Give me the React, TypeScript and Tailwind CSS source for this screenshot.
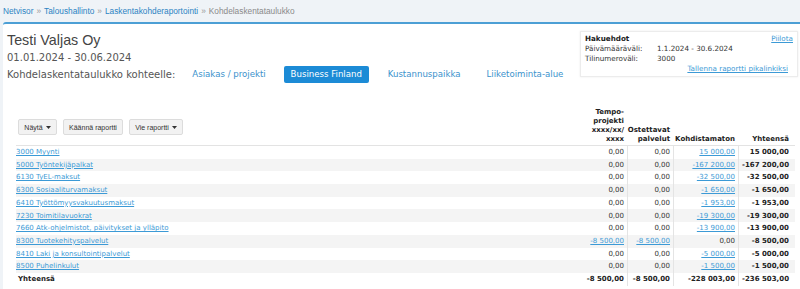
const rows: { name: string; tempo: string; ost: string; kohd: string; tot: string; tempoLink?: boolean; ostLink?: boolean; kohdLink?: boolean }[] = [
  { name: "3000 Myynti", tempo: "0,00", ost: "0,00", kohd: "15 000,00", tot: "15 000,00", kohdLink: true },
  { name: "5000 Työntekijäpalkat", tempo: "0,00", ost: "0,00", kohd: "-167 200,00", tot: "-167 200,00", kohdLink: true },
  { name: "6130 TyEL-maksut", tempo: "0,00", ost: "0,00", kohd: "-32 500,00", tot: "-32 500,00", kohdLink: true },
  { name: "6300 Sosiaaliturvamaksut", tempo: "0,00", ost: "0,00", kohd: "-1 650,00", tot: "-1 650,00", kohdLink: true },
  { name: "6410 Työttömyysvakuutusmaksut", tempo: "0,00", ost: "0,00", kohd: "-1 953,00", tot: "-1 953,00", kohdLink: true },
  { name: "7230 Toimitilavuokrat", tempo: "0,00", ost: "0,00", kohd: "-19 300,00", tot: "-19 300,00", kohdLink: true },
  { name: "7660 Atk-ohjelmistot, päivitykset ja ylläpito", tempo: "0,00", ost: "0,00", kohd: "-13 900,00", tot: "-13 900,00", kohdLink: true },
  { name: "8300 Tuotekehityspalvelut", tempo: "-8 500,00", ost: "-8 500,00", kohd: "0,00", tot: "-8 500,00", tempoLink: true, ostLink: true },
  { name: "8410 Laki ja konsultointipalvelut", tempo: "0,00", ost: "0,00", kohd: "-5 000,00", tot: "-5 000,00", kohdLink: true },
  { name: "8500 Puhelinkulut", tempo: "0,00", ost: "0,00", kohd: "-1 500,00", tot: "-1 500,00", kohdLink: true },
];

const Caret = () => (
  <svg width="5" height="3" viewBox="0 0 5 3" className="ml-[3px]">
    <path d="M0 0H5L2.5 3Z" fill="#333" />
  </svg>
);

const Num = ({ value, link }: { value: string; link?: boolean }) =>
  link ? <a href="#" className="text-[#3c9ad6] underline">{value}</a> : <span>{value}</span>;

export default function App() {
  return (
    <div className="w-[800px] h-[289px] overflow-hidden bg-[#eff3f7] font-['DejaVu_Sans',sans-serif] text-[#333]">
      {/* breadcrumb */}
      <div className="h-[22px] flex items-center pl-[3px] text-[8.3px] font-['Liberation_Sans',sans-serif] text-[#999]">
        <a href="#" className="text-[#2c83c3]">Netvisor</a>
        <span className="mx-[3px]">»</span>
        <a href="#" className="text-[#2c83c3]">Taloushallinto</a>
        <span className="mx-[3px]">»</span>
        <a href="#" className="text-[#2c83c3]">Laskentakohderaportointi</a>
        <span className="mx-[3px]">»</span>
        <span className="text-[#8a8a8a]">Kohdelaskentataulukko</span>
      </div>

      <div className="ml-[3px] h-full bg-white border-t-2 border-[#4c9fd5] rounded-tl-[3px]">
        <div className="flex justify-between h-[60px]">
          <div className="pl-[4px] pt-[8px]">
            <div className="font-['Liberation_Sans',sans-serif] text-[14.3px] leading-[17px] text-[#444]">Testi Valjas Oy</div>
            <div className="text-[10px] leading-[17px] text-[#555]">01.01.2024 - 30.06.2024</div>
            <div className="flex items-center h-[17px]">
              <span className="text-[10px] text-[#555]">Kohdelaskentataulukko kohteelle:</span>
              <a href="#" className="ml-[17px] text-[8.6px] text-[#3b92cc]">Asiakas / projekti</a>
              <span className="ml-[18px] w-[85px] h-[17px] flex items-center justify-center rounded-[2px] bg-[#1c8bd6] text-white text-[8.6px]">Business Finland</span>
              <a href="#" className="ml-[19px] text-[8.6px] text-[#3b92cc]">Kustannuspaikka</a>
              <a href="#" className="ml-[26px] text-[8.6px] text-[#3b92cc]">Liiketoiminta-alue</a>
            </div>
          </div>

          <div className="mt-[7px] mr-[2px] w-[218px] h-[46px] bg-white border border-[#ececec] shadow-[0_0_2px_rgba(0,0,0,0.08)] px-[4px] pt-[2px] text-[7.2px] leading-[10px]">
            <div className="flex justify-between">
              <span className="font-bold text-[#222]">Hakuehdot</span>
              <a href="#" className="text-[#3c9ad6] underline">Piilota</a>
            </div>
            <div className="flex">
              <span className="w-[72px]">Päivämääräväli:</span>
              <span>1.1.2024 - 30.6.2024</span>
            </div>
            <div className="flex">
              <span className="w-[72px]">Tilinumeroväli:</span>
              <span>3000</span>
            </div>
            <div className="flex justify-end pr-[5px]">
              <a href="#" className="text-[#3c9ad6] underline">Tallenna raportti pikalinkiksi</a>
            </div>
          </div>
        </div>

        {/* table */}
        <div className="ml-[13px] mr-[5px] mt-[24px] text-[7px]">
          <div className="flex h-[38px] border-b border-[#e3e3e3] font-bold leading-[9px] text-[#222]">
            <div className="w-[564px] flex items-end gap-[6px] pl-[2px] pb-[10px] font-normal text-[#333] font-['Liberation_Sans',sans-serif]">
              <span className="h-[16px] w-[39px] flex items-center justify-center bg-[#f2f2f2] border border-[#dcdcdc] rounded-[2px]">Näytä<Caret /></span>
              <span className="h-[16px] w-[60px] flex items-center justify-center bg-[#f2f2f2] border border-[#dcdcdc] rounded-[2px]">Käännä raportti</span>
              <span className="h-[16px] w-[54px] flex items-center justify-center bg-[#f2f2f2] border border-[#dcdcdc] rounded-[2px]">Vie raportti<Caret /></span>
            </div>
            <div className="w-[47px] flex flex-col items-end justify-end pr-[3px] pb-[1px] text-right">
              <span>Tempo-</span><span>projekti</span><span>xxxx/xx/</span><span>xxxx</span>
            </div>
            <div className="w-[46px] flex flex-col items-end justify-end pr-[3px] pb-[1px] text-right whitespace-nowrap">
              <span>Ostettavat</span><span>palvelut</span>
            </div>
            <div className="w-[65px] flex items-end justify-end pr-[3px] pb-[1px]">Kohdistamaton</div>
            <div className="flex-1 flex items-end justify-end pr-[6px] pb-[1px]">Yhteensä</div>
          </div>

          {rows.map((r, i) => (
            <div key={r.name} className={`flex h-[12.7px] ${i % 2 === 1 ? "bg-[#f4f4f4]" : "bg-white"}`}>
              <div className="w-[564px] flex items-center">
                <a href="#" className="text-[#3c9ad6] underline">{r.name}</a>
              </div>
              <div className="w-[47px] flex items-center justify-end pr-[3px]"><Num value={r.tempo} link={r.tempoLink} /></div>
              <div className="w-[46px] flex items-center justify-end pr-[3px] border-l border-[#e4e4e4]"><Num value={r.ost} link={r.ostLink} /></div>
              <div className="w-[65px] flex items-center justify-end pr-[3px] border-l border-[#e4e4e4]"><Num value={r.kohd} link={r.kohdLink} /></div>
              <div className="flex-1 flex items-center justify-end pr-[6px] border-l border-[#e4e4e4] font-bold text-[#222]">{r.tot}</div>
            </div>
          ))}
          <div className="flex h-[12.7px] font-bold text-[#222]">
            <div className="w-[564px] flex items-center pl-[2px]">Yhteensä</div>
            <div className="w-[47px] flex items-center justify-end pr-[3px]">-8 500,00</div>
            <div className="w-[46px] flex items-center justify-end pr-[3px] border-l border-[#e4e4e4]">-8 500,00</div>
            <div className="w-[65px] flex items-center justify-end pr-[3px] border-l border-[#e4e4e4]">-228 003,00</div>
            <div className="flex-1 flex items-center justify-end pr-[6px] border-l border-[#e4e4e4]">-236 503,00</div>
          </div>
        </div>
      </div>
    </div>
  );
}
